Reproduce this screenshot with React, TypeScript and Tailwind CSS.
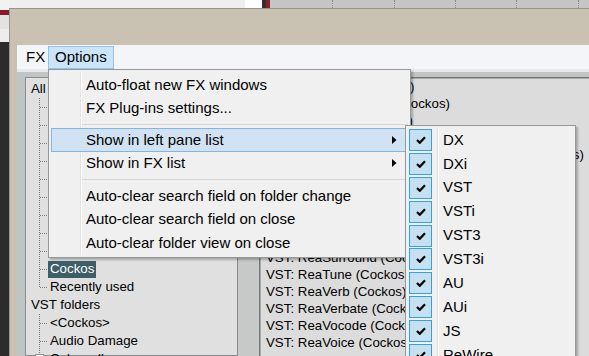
const FONT = "font-['Liberation_Sans',Arial,sans-serif]";

const PLUGINS = [
  "VST: ReaComp (Cockos)",
  "VST: ReaControlMIDI (Cockos)",
  "VST: ReaDelay (Cockos)",
  "VST: ReaEQ (Cockos)",
  "VST: ReaFir (FFT EQ+Dynamics Processor) (Cockos)",
  "VST: ReaGate (Cockos)",
  "VST: ReaInsert (Cockos)",
  "VST: ReaLimit (Cockos)",
  "VST: ReaPitch (Cockos)",
  "VST: ReaStream (Cockos)",
  "VST: ReaSurround (Cockos)",
  "VST: ReaTune (Cockos)",
  "VST: ReaVerb (Cockos)",
  "VST: ReaVerbate (Cockos)",
  "VST: ReaVocode (Cockos)",
  "VST: ReaVoice (Cockos)",
  "VST: ReaXcomp (Cockos)",
];

const ALL_CHILDREN = ["DX", "DXi", "VST", "VSTi", "VST3", "VST3i", "JS", "ReWire", "Instruments", "Cockos", "Recently used"];

type MenuEntry = { label: string; sub?: boolean; hot?: boolean } | { sep: number };

const MENU: MenuEntry[] = [
  { label: "Auto-float new FX windows" },
  { label: "FX Plug-ins settings..." },
  { sep: 8 },
  { label: "Show in left pane list", sub: true, hot: true },
  { label: "Show in FX list", sub: true },
  { sep: 9 },
  { label: "Auto-clear search field on folder change" },
  { label: "Auto-clear search field on close" },
  { label: "Auto-clear folder view on close" },
];

const TYPES = ["DX", "DXi", "VST", "VSTi", "VST3", "VST3i", "AU", "AUi", "JS", "ReWire"];

function Check() {
  return (
    <svg width="10" height="8" viewBox="0 0 10 8">
      <polyline points="1,4 3.8,6.8 9,1.2" fill="none" stroke="#000" strokeWidth="2.2" />
    </svg>
  );
}

function Arrow() {
  return (
    <svg width="5" height="8" viewBox="0 0 5 8">
      <polygon points="0,0 4.5,4 0,8" fill="#000" />
    </svg>
  );
}

function Branch({ kind }: { kind: "mid" | "last" | "plus" }) {
  return (
    <svg width="22" height="18" className="shrink-0">
      <line x1="13.5" y1="0" x2="13.5" y2={kind === "last" ? 9 : 18} stroke="#7a7a7a" strokeDasharray="1 1" />
      <line x1="14" y1="9.5" x2="22" y2="9.5" stroke="#7a7a7a" strokeDasharray="1 1" />
      {kind === "plus" && (
        <>
          <rect x="9.5" y="4.5" width="8" height="8" fill="#fff" stroke="#919191" />
          <line x1="11" y1="8.5" x2="16" y2="8.5" stroke="#000" />
          <line x1="13.5" y1="6" x2="13.5" y2="11" stroke="#000" />
        </>
      )}
    </svg>
  );
}

function Child({ label, kind, selected }: { label: string; kind: "mid" | "last" | "plus"; selected?: boolean }) {
  return (
    <div className="h-[18px] flex items-center">
      <Branch kind={kind} />
      <span
        className={
          "h-[17px] px-[2px] flex items-center whitespace-nowrap " +
          (selected ? "bg-[#3d5d67] text-white" : "")
        }
      >
        {label}
      </span>
    </div>
  );
}

export default function App() {
  return (
    <div className={`relative w-[589px] h-[356px] overflow-hidden flex bg-[#2c2c2c] text-black ${FONT}`}>
      {/* desktop strip on the left */}
      <div className="w-[9px] flex flex-col shrink-0">
        <div className="h-[10px] bg-[#f2f2f2]" />
        <div className="h-[5px] bg-[#8a1a2a]" />
        <div className="h-[14px] bg-[#e2e2e2]" />
        <div className="h-[13px] bg-[#ededed]" />
        <div className="flex-1 bg-[#2c2c2c]" />
      </div>

      <div className="flex-1 flex flex-col min-w-0">
        {/* strip above the window */}
        <div className="h-[8px] flex shrink-0">
          <div className="w-[236px] bg-[#efefef]" />
          <div className="w-[17px] bg-white" />
          <div className="w-[4px] bg-[#303030]" />
          <div className="w-[4px] bg-[#8d1d2b]" />
          <div className="flex-1 flex bg-[#c4c6c6]">
            <div className="w-[63px] border-r border-dotted border-[#8a8a8a]" />
            <div className="w-[62px] border-r border-dotted border-[#8a8a8a]" />
            <div className="w-[61px] border-r border-dotted border-[#8a8a8a]" />
            <div className="w-[61px] border-r border-dotted border-[#8a8a8a]" />
            <div className="w-[62px] border-r border-dotted border-[#8a8a8a]" />
          </div>
        </div>

        {/* FX browser window */}
        <div className="flex-1 flex flex-col border-l border-t border-[#9b968c] bg-[#c9c1b1] min-h-0">
          <div className="h-[36px] shrink-0" />
          <div className="flex-1 flex flex-col ml-[7px] min-h-0">
            <div className="h-[24px] flex bg-[#f4f5f8] text-[15px] shrink-0">
              <div className="w-[31px] pl-[9px] flex items-center">FX</div>
              <div className="w-[66px] mt-px pl-[6px] flex items-center bg-[#cce4f7] border border-[#8fc2ed]">Options</div>
            </div>
            <div className="h-[3px] bg-[#e8eaea] shrink-0" />
            <div className="flex-1 flex bg-[#bfc4c4] pl-[8px] pt-[5px] text-[13.3px] min-h-0">
              {/* folder tree */}
              <div className="w-[213px] shrink-0 bg-[#dfe0df] border border-[#878b8b] pt-[2px]">
                <div className="h-[18px] flex items-center pl-[5px] whitespace-nowrap">All Plugins</div>
                {ALL_CHILDREN.map((c, i) => (
                  <Child
                    key={c}
                    label={c}
                    kind={i === ALL_CHILDREN.length - 1 ? "last" : "mid"}
                    selected={c === "Cockos"}
                  />
                ))}
                <div className="h-[18px] flex items-center pl-[5px]">VST folders</div>
                <Child label="<Cockos>" kind="mid" />
                <Child label="Audio Damage" kind="mid" />
                <Child label="Cakewalk" kind="plus" />
              </div>
              <div className="w-[21px] shrink-0 bg-[#c7c9c9]" />
              {/* plug-in list */}
              <div className="flex-1 bg-[#dcdcdc] border-l border-t border-[#767878] shadow-[inset_1px_1px_0_#a6a8a8] pl-[6px] overflow-hidden">
                {PLUGINS.map((p) => (
                  <div key={p} className="h-[17.1px] leading-[17.1px] whitespace-nowrap">
                    {p}
                  </div>
                ))}
              </div>
            </div>
          </div>
        </div>
      </div>

      {/* Options menu */}
      <div className="absolute left-[48px] top-[69px] w-[363px] h-[189px] bg-[#f0f0f0] border border-[#979797] pt-[3px] text-[15px] shadow-[2px_2px_2px_rgba(0,0,0,0.25)]">
        <div className="absolute left-[31px] top-[2px] bottom-[2px] w-[2px] border-l border-[#e2e2e2] border-r border-r-white" />
        {MENU.map((m, i) =>
          "sep" in m ? (
            <div key={i} className={"relative flex items-center " + (m.sep === 8 ? "h-[8px]" : "h-[9px]")}>
              <div className="ml-[33px] mr-[2px] flex-1 h-px bg-[#d7d7d7]" />
            </div>
          ) : (
            <div
              key={i}
              className={
                "relative ml-[2px] mr-[4px] h-[23.5px] flex items-center pl-[34px] pr-[8px] border whitespace-nowrap " +
                (m.hot ? "bg-[#d1e3f3] border-[#80b6e6]" : "border-transparent")
              }
            >
              <span>{m.label}</span>
              {m.sub && (
                <span className="ml-auto flex">
                  <Arrow />
                </span>
              )}
            </div>
          )
        )}
      </div>

      {/* Show in left pane list submenu */}
      <div className="absolute left-[405px] top-[125px] w-[171px] h-[260px] bg-[#f0f0f0] border border-[#979797] pt-[2px] text-[15px] shadow-[2px_2px_2px_rgba(0,0,0,0.25)]">
        <div className="absolute left-[31px] top-[2px] bottom-0 w-[2px] border-l border-[#e2e2e2] border-r border-r-white" />
        {TYPES.map((t) => (
          <div key={t} className="relative h-[23.9px] flex items-center">
            <div className="ml-[3px] w-[23px] h-[22px] flex items-center justify-center bg-[#c4e0f1] border border-[#35a0de]">
              <Check />
            </div>
            <span className="ml-[11px]">{t}</span>
          </div>
        ))}
      </div>
    </div>
  );
}
